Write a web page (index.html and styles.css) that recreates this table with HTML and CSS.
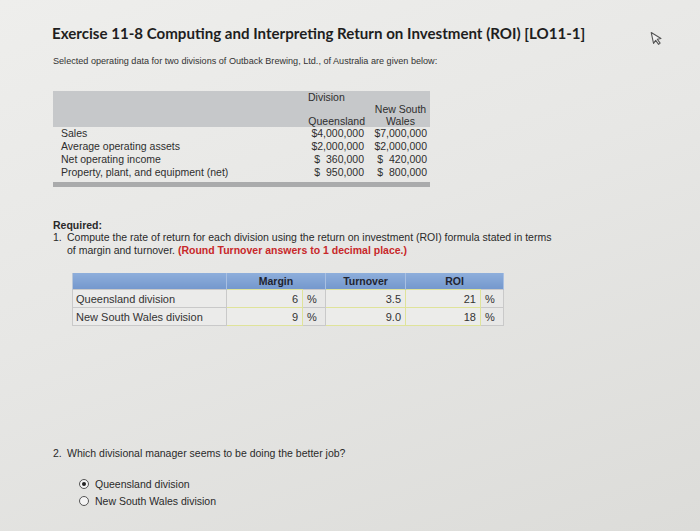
FILE: index.html
```html
<!DOCTYPE html>
<html>
<head>
<meta charset="utf-8">
<link rel="stylesheet" href="styles.css">
</head>
<body>
<div class="page">
  <h1 class="title">Exercise 11-8 Computing and Interpreting Return on Investment (ROI) [LO11-1]</h1>
  <p class="intro">Selected operating data for two divisions of Outback Brewing, Ltd., of Australia are given below:</p>

  <table class="data">
    <colgroup><col class="c-label"><col class="c-num"><col class="c-num"></colgroup>
    <thead>
      <tr class="h1"><th></th><th colspan="2" class="div">Division</th></tr>
      <tr class="h2"><th></th><th class="q">Queensland</th><th class="nsw">New South<br>Wales</th></tr>
    </thead>
    <tbody>
      <tr><td>Sales</td><td class="n">$4,000,000</td><td class="n">$7,000,000</td></tr>
      <tr><td>Average operating assets</td><td class="n">$2,000,000</td><td class="n">$2,000,000</td></tr>
      <tr><td>Net operating income</td><td class="n"><span class="d">$</span>360,000</td><td class="n"><span class="d">$</span>420,000</td></tr>
      <tr><td>Property, plant, and equipment (net)</td><td class="n"><span class="d">$</span>950,000</td><td class="n"><span class="d">$</span>800,000</td></tr>
    </tbody>
  </table>
  <div class="bar"></div>

  <div class="required">
    <div class="req-h">Required:</div>
    <div class="item"><span class="num">1.</span><div class="txt"><div>Compute the rate of return for each division using the return on investment (ROI) formula stated in terms</div><div>of margin and turnover. <b class="red">(Round Turnover answers to 1 decimal place.)</b></div></div></div>
  </div>

  <table class="ans">
    <colgroup><col class="a-label"><col class="a-in"><col class="a-pct"><col class="a-turn"><col class="a-in2"><col class="a-pct"></colgroup>
    <thead>
      <tr><th></th><th colspan="2">Margin</th><th>Turnover</th><th colspan="2">ROI</th></tr>
    </thead>
    <tbody>
      <tr><td class="lbl">Queensland division</td><td class="in">6</td><td class="pct">%</td><td class="in">3.5</td><td class="in">21</td><td class="pct">%</td></tr>
      <tr><td class="lbl">New South Wales division</td><td class="in">9</td><td class="pct">%</td><td class="in">9.0</td><td class="in">18</td><td class="pct">%</td></tr>
    </tbody>
  </table>

  <div class="q2">
    <div class="item"><span class="num">2.</span><span class="txt">Which divisional manager seems to be doing the better job?</span></div>
    <ul class="opts">
      <li><span class="radio on"></span>Queensland division</li>
      <li><span class="radio"></span>New South Wales division</li>
    </ul>
  </div>
</div>
<svg class="cursor" width="12" height="16" viewBox="0 0 12 16"><path d="M1.5 1.5 L1.5 12.5 L4.2 10 L6.3 14.5 L8 13.7 L6 9.3 L9.8 9.3 Z" fill="#f2f2f2" stroke="#555" stroke-width="1.1" stroke-linejoin="round"/></svg>
</body>
</html>
```

FILE: styles.css
```css
html, body { margin: 0; padding: 0; }
body {
  width: 700px;
  height: 531px;
  overflow: hidden;
  background: linear-gradient(160deg, #eeeeec 0%, #e7e7e5 45%, #dcdcd9 100%);
  font-family: "Liberation Sans", Arial, sans-serif;
  color: #2a2a2a;
  position: relative;
}
.page { padding: 24px 0 0 52px; }
.title {
  margin: 0;
  font-family: Lato, "Open Sans", sans-serif;
  font-weight: 700;
  font-size: 15.1px;
  line-height: 18px;
  color: #1e1e1e;
}
.intro {
  margin: 13px 0 0 1px;
  font-size: 9.1px;
  line-height: 12px;
  color: #333;
}
.data {
  margin-top: 24px;
  margin-left: 1px;
  border-collapse: collapse;
  font-size: 10.5px;
  color: #2e2e2e;
}
.c-label { width: 251px; }
.c-num { width: 63px; }
.data th, .data td { padding: 0; font-weight: normal; }
.data thead th { background: #c6c8ca; }
.data .h1 th { height: 13px; line-height: 13px; vertical-align: bottom; }
.data .div { text-align: left; padding-left: 4px; }
.data .h2 th { height: 23px; line-height: 11.5px; vertical-align: bottom; }
.data .q { text-align: right; padding-right: 2px; }
.data .nsw { text-align: center; padding-left: 4px; }
.data tbody td { height: 13px; line-height: 13px; padding-left: 8px; white-space: nowrap; }
.data td.n { text-align: right; padding-left: 0; padding-right: 3px; }
.data .d { margin-right: 6px; }
.bar {
  width: 377px;
  height: 5px;
  margin: 3px 0 0 1px;
  background: #aaabac;
}
.required { margin-top: 32px; margin-left: 1px; font-size: 10.5px; color: #2a2a2a; }
.req-h { font-weight: 700; line-height: 12px; }
.item { display: flex; line-height: 12.5px; }
.num { width: 14px; flex: none; }
.txt { width: 520px; white-space: nowrap; }
.red { color: #c8282a; }
.ans {
  margin: 17px 0 0 20px;
  border-collapse: collapse;
  font-size: 11px;
  color: #333;
}
.a-label { width: 154px; }
.a-in { width: 76px; }
.a-pct { width: 23px; }
.a-turn { width: 80px; }
.a-in2 { width: 75px; }
.ans th {
  height: 16px;
  padding: 0;
  background: linear-gradient(#8eaedb, #7498cd);
  border-right: 1px solid #a9c0e2;
  font-weight: 700;
  color: #1f2430;
  text-align: center;
  font-size: 10.5px;
}
.ans th:first-child { border-left: 1px solid #b8c6d8; }
.ans td {
  height: 17px;
  padding: 0 4px;
  border: 1px solid #c9c9c9;
  background: #ebebea;
}
.ans td.lbl { padding-left: 3px; }
.ans td.in {
  text-align: right;
  border: 1.5px solid #dfe39a;
  background: #ececea;
  padding-right: 4px;
}
.ans td.pct { padding-left: 4px; background: #e8e8e7; }
.q2 { margin-top: 121px; margin-left: 1px; font-size: 10.5px; color: #2a2a2a; }
.opts { list-style: none; margin: 16px 0 0 26px; padding: 0; }
.opts li { display: flex; align-items: center; height: 17px; line-height: 17px; }
.radio {
  width: 8px; height: 8px;
  border: 1px solid #555;
  border-radius: 50%;
  background: #f4f4f4;
  margin-right: 6px;
  position: relative;
  flex: none;
}
.radio.on::after {
  content: "";
  position: absolute;
  left: 2px; top: 2px;
  width: 4px; height: 4px;
  border-radius: 50%;
  background: #222;
}
.cursor { position: absolute; left: 651px; top: 30px; transform: rotate(-12deg); }
```
